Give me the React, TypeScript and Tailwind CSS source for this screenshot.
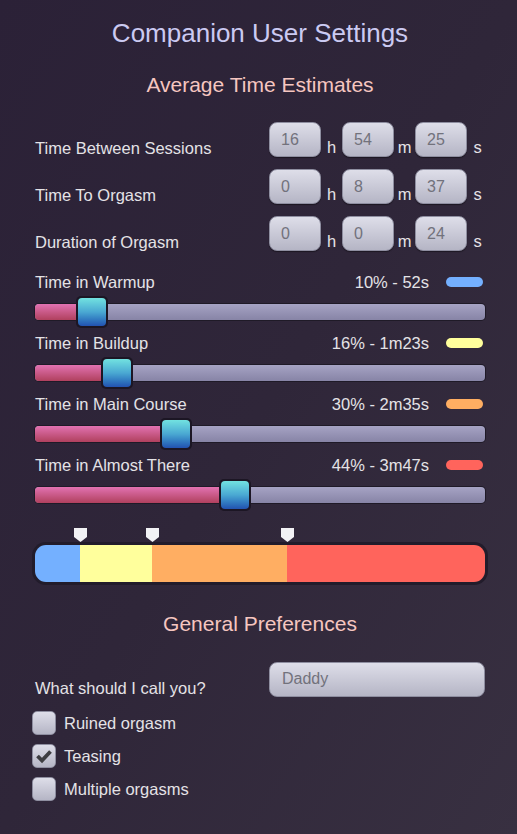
import React from 'react'

const font = { fontFamily: '"Liberation Sans", Arial, sans-serif' }

type TimeRow = { label: string; h: string; m: string; s: string }

const times: TimeRow[] = [
  { label: 'Time Between Sessions', h: '16', m: '54', s: '25' },
  { label: 'Time To Orgasm', h: '0', m: '8', s: '37' },
  { label: 'Duration of Orgasm', h: '0', m: '0', s: '24' },
]

const phases = [
  { label: 'Time in Warmup', value: '10% - 52s', pct: 10, pill: 'bg-[#74b0ff]' },
  { label: 'Time in Buildup', value: '16% - 1m23s', pct: 16, pill: 'bg-[#ffff9c]' },
  { label: 'Time in Main Course', value: '30% - 2m35s', pct: 30, pill: 'bg-[#ffae62]' },
  { label: 'Time in Almost There', value: '44% - 3m47s', pct: 44, pill: 'bg-[#ff645c]' },
]

function NumBox({ value }: { value: string }) {
  return (
    <div className="flex h-[35px] w-[52px] shrink-0 items-center rounded-[8px] border border-[#8e8ea0] bg-gradient-to-b from-[#dedee9] to-[#b5b5c5] pl-[11px] text-[16px] text-[#72727c] shadow-[0_1px_1px_rgba(0,0,0,0.4)]">
      {value}
    </div>
  )
}

function Unit({ children }: { children: React.ReactNode }) {
  return (
    <span className="w-[21px] shrink-0 self-end pb-[1px] text-center text-[16.5px] leading-[18px] text-[#e4e2e6]">
      {children}
    </span>
  )
}

function Slider({ pct }: { pct: number }) {
  // thumb is 30px wide, travels over the 420px left
  const left = (pct / 100) * 420
  return (
    <div className="relative mt-[5px] h-[32px] w-full">
      <div className="absolute left-[-1px] right-[-1px] top-[7px] h-[18px] rounded-[5px] bg-[#1f1a27]" />
      <div className="absolute left-0 right-0 top-[8px] h-[16px] overflow-hidden rounded-[4px] bg-gradient-to-b from-[#a6a3c4] to-[#8784a6]">
        <div
          className="h-full bg-gradient-to-b from-[#e272b2] to-[#b0405e]"
          style={{ width: left + 15 }}
        />
      </div>
      <div
        className="absolute top-0 h-[32px] w-[32px] rounded-[5px] bg-[#1c1624] p-[2px]"
        style={{ left: left - 1 }}
      >
        <div className="h-full w-full rounded-[4px] bg-gradient-to-b from-[#72e2e0] via-[#4aa8d2] to-[#2352b0]" />
      </div>
    </div>
  )
}

function Marker({ left }: { left: number }) {
  return (
    <svg
      className="absolute top-[-14px]"
      style={{ left: left - 6.5 }}
      width="13"
      height="14"
      viewBox="0 0 13 14"
    >
      <polygon points="0,0 13,0 13,9 6.5,14 0,9" fill="#f2f2f5" />
    </svg>
  )
}

function CheckBox({ checked, label }: { checked?: boolean; label: string }) {
  return (
    <div className="flex h-[24px] items-center">
      <div className="ml-[-3px] flex h-[24px] w-[24px] items-center justify-center rounded-[5px] border border-[#8e8ea0] bg-gradient-to-b from-[#dedee9] to-[#b5b5c5]">
        {checked && (
          <svg width="20" height="20" viewBox="0 0 20 20">
            <path d="M3.5 10 L8 14.5 L16.5 5.5" fill="none" stroke="#3e3e42" strokeWidth="3.8" />
          </svg>
        )}
      </div>
      <span className="ml-[8px] text-[16.5px] leading-[18px] text-[#e4e2e6]">{label}</span>
    </div>
  )
}

export default function App() {
  const widths = [10, 16, 30, 44]
  let acc = 0
  const stops = widths.slice(0, 3).map((w) => {
    acc += w
    return (acc / 100) * 450
  })

  return (
    <div
      className="min-h-[834px] w-full bg-gradient-to-br from-[#2b2137] via-[#2f2639] to-[#383041] pl-[35px] pr-[32px]"
      style={font}
    >
      <h1 className="pt-[18px] text-center text-[26px] leading-[30px] text-[#cbcaf2]">
        Companion User Settings
      </h1>
      <h2 className="mt-[25px] text-center text-[21px] leading-[24px] text-[#f6c6c0]">
        Average Time Estimates
      </h2>

      <div className="mt-[25px] flex flex-col gap-[12px]">
        {times.map((t) => (
          <div key={t.label} className="flex h-[35px] items-end">
            <span className="w-[234px] shrink-0 text-[16.5px] leading-[18px] text-[#e4e2e6]">{t.label}</span>
            <div className="flex h-[35px] shrink-0">
              <NumBox value={t.h} />
              <Unit>h</Unit>
              <NumBox value={t.m} />
              <Unit>m</Unit>
              <NumBox value={t.s} />
              <Unit>s</Unit>
            </div>
          </div>
        ))}
      </div>

      <div className="mt-[22px] flex flex-col">
        {phases.map((p) => (
          <div key={p.label} className="mb-[6px]">
            <div className="flex h-[18px] items-center text-[16.5px] leading-[18px] text-[#e4e2e6]">
              <span className="flex-1">{p.label}</span>
              <span>{p.value}</span>
              <span className={`ml-[17px] mr-[2px] h-[10px] w-[37px] rounded-full ${p.pill}`} />
            </div>
            <Slider pct={p.pct} />
          </div>
        ))}
      </div>

      <div className="relative mt-[25px] w-[450px]">
        {stops.map((s) => (
          <Marker key={s} left={s} />
        ))}
        <div className="-mx-[3px] rounded-[14px] bg-[#221c2b] p-[3px]">
          <div className="flex h-[37px] overflow-hidden rounded-[11px]">
            <div className="w-[10%] bg-[#74b0ff]" />
            <div className="w-[16%] bg-[#ffff9c]" />
            <div className="w-[30%] bg-[#ffae62]" />
            <div className="w-[44%] bg-[#ff645c]" />
          </div>
        </div>
      </div>

      <h2 className="mt-[27px] text-center text-[21px] leading-[24px] text-[#f6c6c0]">
        General Preferences
      </h2>

      <div className="mt-[26px] flex items-end">
        <span className="w-[234px] shrink-0 text-[16.5px] leading-[18px] text-[#e4e2e6]">What should I call you?</span>
        <div className="flex h-[35px] w-[216px] shrink-0 items-start rounded-[8px] border border-[#8e8ea0] bg-gradient-to-b from-[#dedee9] to-[#b5b5c5] pl-[12px] pt-[7px] text-[16px] leading-[18px] text-[#72727c]">
          Daddy
        </div>
      </div>

      <div className="mt-[14px] flex flex-col gap-[9px]">
        <CheckBox label="Ruined orgasm" />
        <CheckBox label="Teasing" checked />
        <CheckBox label="Multiple orgasms" />
      </div>
    </div>
  )
}
